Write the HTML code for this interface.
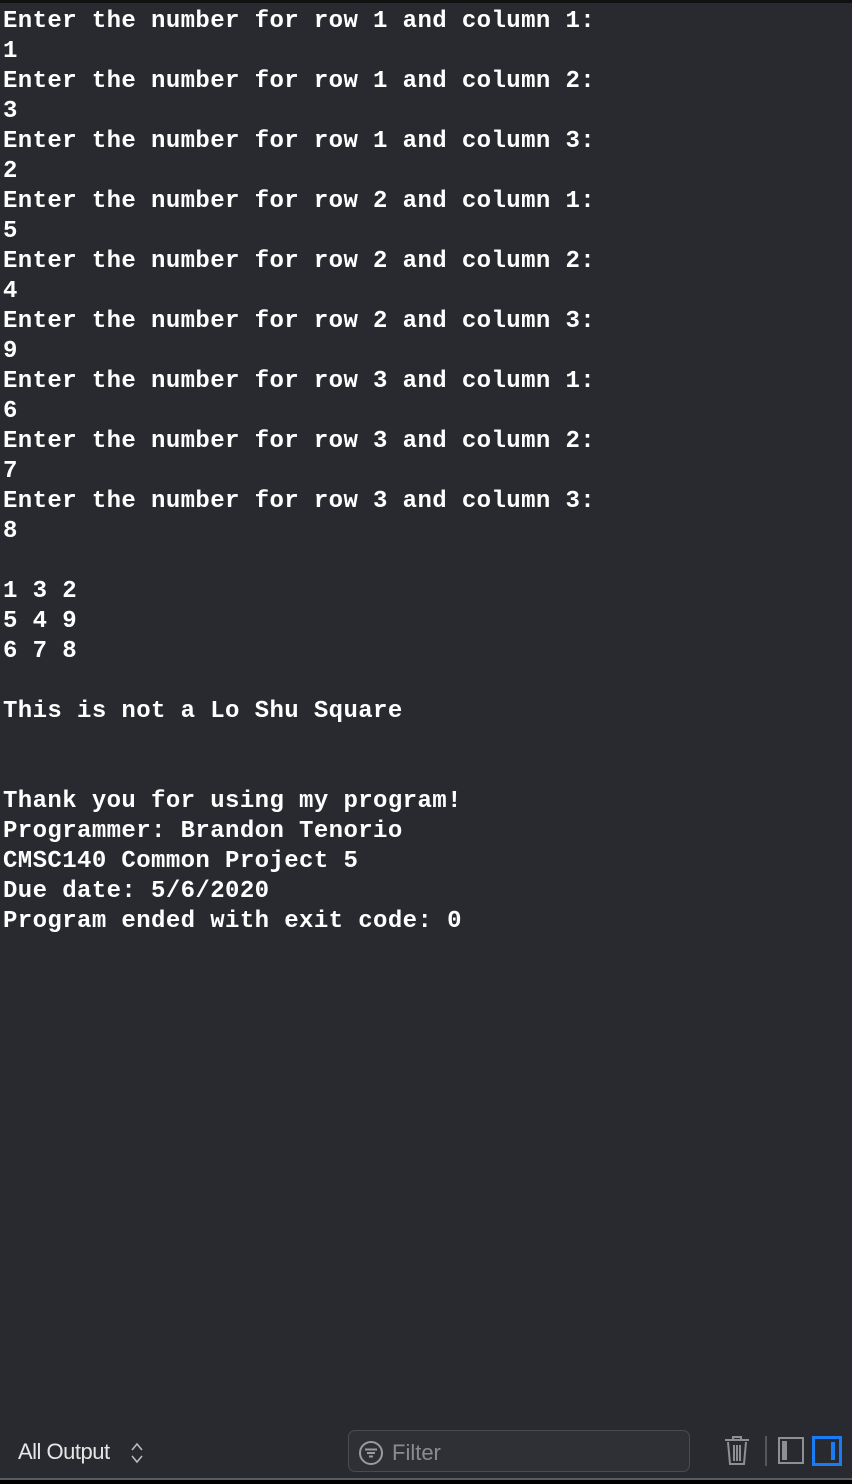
<!DOCTYPE html>
<html><head><meta charset="utf-8"><style>
html,body{margin:0;padding:0;width:852px;height:1484px;background:#292a30;overflow:hidden;}
.top{position:absolute;left:0;top:0;width:852px;height:3px;background:#111;}
pre{position:absolute;left:3px;top:7px;margin:0;font-family:"Liberation Mono",monospace;font-weight:bold;font-size:24px;letter-spacing:0.4px;line-height:30px;color:#fff;}
.lbl{position:absolute;left:18px;top:1439px;font-family:"Liberation Sans",sans-serif;font-size:22px;color:#e6e6e6;letter-spacing:-0.5px;}
.filter{position:absolute;left:348px;top:1430px;width:342px;height:42px;border:1px solid #4a4b50;border-radius:7px;background:#2f3035;box-sizing:border-box;}
.ftxt{position:absolute;left:43px;top:9px;font-family:"Liberation Sans",sans-serif;font-size:22px;color:#8a8b90;}
.bot1{position:absolute;left:0;top:1478px;width:852px;height:2px;background:#5a5b60;}
.bot2{position:absolute;left:0;top:1480px;width:852px;height:4px;background:#000;}
</style></head><body>
<div class="top"></div>
<pre>Enter the number for row 1 and column 1:
1
Enter the number for row 1 and column 2:
3
Enter the number for row 1 and column 3:
2
Enter the number for row 2 and column 1:
5
Enter the number for row 2 and column 2:
4
Enter the number for row 2 and column 3:
9
Enter the number for row 3 and column 1:
6
Enter the number for row 3 and column 2:
7
Enter the number for row 3 and column 3:
8

1 3 2 
5 4 9 
6 7 8 

This is not a Lo Shu Square


Thank you for using my program!
Programmer: Brandon Tenorio
CMSC140 Common Project 5
Due date: 5/6/2020
Program ended with exit code: 0</pre>
<div class="lbl">All Output</div>
<svg style="position:absolute;left:129px;top:1441px" width="16" height="24" viewBox="0 0 16 24"><path d="M3 9 L8 3 L13 9 M3 15 L8 21 L13 15" fill="none" stroke="#bbb" stroke-width="1.6"/></svg>
<div class="filter"><svg style="position:absolute;left:9px;top:9px" width="26" height="26" viewBox="0 0 26 26"><circle cx="13" cy="13" r="11" fill="none" stroke="#9a9b9f" stroke-width="2"/><path d="M7 9.5h12M9 13h8M11 16.5h4" stroke="#9a9b9f" stroke-width="2"/></svg><div class="ftxt">Filter</div></div>
<svg style="position:absolute;left:722px;top:1434px" width="30" height="34" viewBox="0 0 30 34"><path d="M3 6h24M11 6V3h8v3M6 8l2 22h14l2-22M12 11v16M15 11v16M18 11v16" fill="none" stroke="#8e8f93" stroke-width="2"/></svg>
<div style="position:absolute;left:765px;top:1436px;width:2px;height:30px;background:#55565b"></div>
<div style="position:absolute;left:778px;top:1437px;width:26px;height:27px;border:2px solid #8e8f93;box-sizing:border-box"><div style="position:absolute;left:2px;top:2px;width:5px;height:19px;background:#8e8f93"></div></div>
<div style="position:absolute;left:812px;top:1436px;width:30px;height:30px;border:3px solid #1a7cf5;box-sizing:border-box"><div style="position:absolute;right:4px;top:3px;width:4px;height:18px;background:#1a7cf5"></div></div>
<div class="bot1"></div><div class="bot2"></div>
</body></html>
